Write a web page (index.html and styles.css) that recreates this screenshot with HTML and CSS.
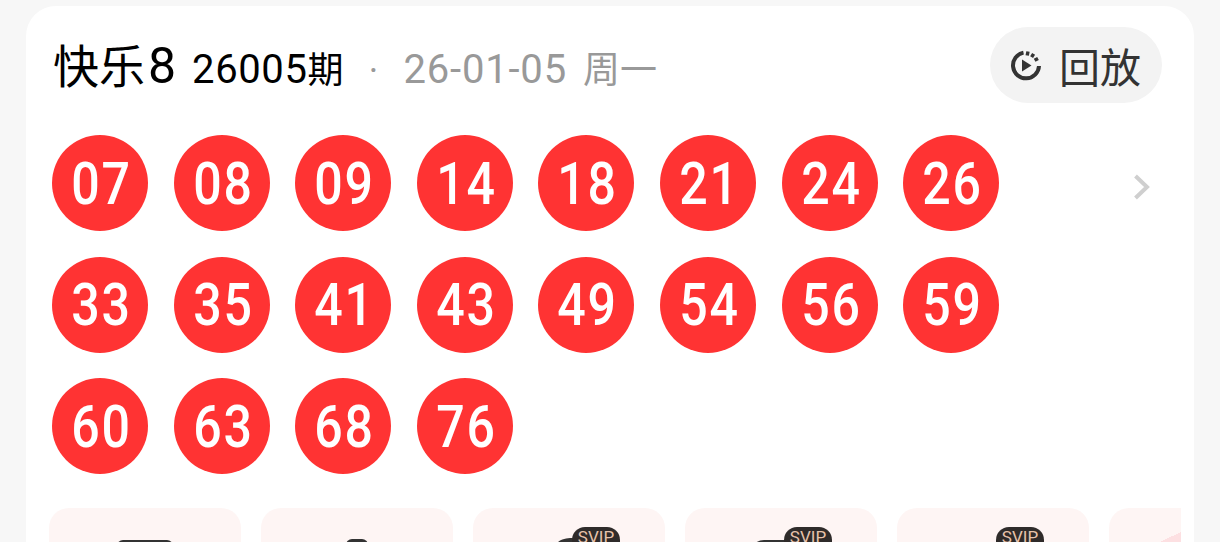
FILE: index.html
```html
<!DOCTYPE html>
<html lang="zh-CN">
<head>
  <meta charset="UTF-8" />
  <meta name="viewport" content="width=device-width, initial-scale=1.0"/>
  <title>快乐8 开奖</title>
  <link rel="stylesheet" href="styles.css">
</head>
<body>
  <div class="card">
    <div class="head">
      <div class="title">
        <span class="name">快乐<em class="name-num">8</em></span>
        <span class="issue">26005<em class="issue-unit">期</em></span>
        <span class="dot">·</span>
        <span class="date">26-01-05</span>
        <span class="week">周一</span>
      </div>
      <div class="replay">
        <svg class="replay-icon" viewBox="0 0 32 32" width="32" height="32">
          <path d="M13.5 3.6A13 13 0 1 0 29 17" fill="none" stroke="#333" stroke-width="4"/>
          <path d="M18 2.5l-0.8 4M23.6 4.8l-2 3.4M28 9.4l-3.4 1.9" fill="none" stroke="#333" stroke-width="3.4"/>
          <path d="M12 10.5l9.5 6-9.5 6z" fill="#333"/>
        </svg>
        <span>回放</span>
      </div>
    </div>

    <div class="draw">
      <div class="balls">
        <div class="ball"><span>07</span></div>
        <div class="ball"><span>08</span></div>
        <div class="ball"><span>09</span></div>
        <div class="ball"><span>14</span></div>
        <div class="ball"><span>18</span></div>
        <div class="ball"><span>21</span></div>
        <div class="ball"><span>24</span></div>
        <div class="ball"><span>26</span></div>
        <div class="ball"><span>33</span></div>
        <div class="ball"><span>35</span></div>
        <div class="ball"><span>41</span></div>
        <div class="ball"><span>43</span></div>
        <div class="ball"><span>49</span></div>
        <div class="ball"><span>54</span></div>
        <div class="ball"><span>56</span></div>
        <div class="ball"><span>59</span></div>
        <div class="ball"><span>60</span></div>
        <div class="ball"><span>63</span></div>
        <div class="ball"><span>68</span></div>
        <div class="ball"><span>76</span></div>
      </div>
      <svg class="more" viewBox="0 0 18 26" width="18" height="26">
        <path d="M2.5 2L14 13 2.5 24" fill="none" stroke="#cfcfcf" stroke-width="4"/>
      </svg>
    </div>

    <div class="tools">
      <div class="tool"><i class="pic pic-wide"></i></div>
      <div class="tool"><i class="pic pic-small"></i></div>
      <div class="tool"><i class="pic pic-a"></i><b class="svip">SVIP</b></div>
      <div class="tool"><i class="pic pic-b"></i><b class="svip">SVIP</b></div>
      <div class="tool"><b class="svip">SVIP</b></div>
      <div class="tool tool-last"></div>
    </div>
  </div>
</body>
</html>
```

FILE: styles.css
```css
html, body {
  margin: 0;
  height: 542px;
  overflow: hidden;
}

body {
  background: #f7f7f7;
  font-family: "Roboto", "Noto Sans CJK SC", sans-serif;
  padding-top: 6px;
  box-sizing: border-box;
}

em {
  font-style: normal;
}

.card {
  margin: 0 26px;
  height: 536px;
  overflow: hidden;
  background: #fff;
  border-radius: 30px 30px 0 0;
  box-sizing: border-box;
  padding: 21px 32px 0 23px;
}

.head {
  display: flex;
  align-items: center;
  justify-content: space-between;
  height: 76px;
}

.title {
  display: flex;
  align-items: baseline;
  padding: 0 0 5px 4px;
  white-space: nowrap;
}

.name {
  font-size: 46px;
  color: #000;
}

.name-num {
  font-size: 50px;
  margin-left: 3px;
}

.issue {
  font-size: 40px;
  letter-spacing: 0.6px;
  color: #000;
  margin-left: 16px;
}

.issue-unit {
  font-size: 36px;
  letter-spacing: 0;
}

.dot {
  width: 60px;
  text-align: center;
  font-size: 36px;
  color: #999;
}

.date {
  font-size: 40px;
  letter-spacing: 0.8px;
  color: #999;
}

.week {
  font-size: 37px;
  color: #999;
  margin-left: 16px;
}

.replay {
  display: flex;
  align-items: center;
  gap: 17px;
  width: 172px;
  height: 76px;
  box-sizing: border-box;
  padding-left: 20px;
  border-radius: 38px;
  background: #f3f3f3;
  color: #333;
  font-size: 41px;
}

.draw {
  display: flex;
  justify-content: space-between;
  margin: 32px 0 0 3px;
}

.balls {
  display: grid;
  grid-template-columns: repeat(8, 96px);
  column-gap: 25.6px;
  row-gap: 25.5px;
  grid-auto-rows: 96px;
}

.ball {
  display: flex;
  align-items: center;
  justify-content: center;
  padding-left: 3px;
  box-sizing: border-box;
  border-radius: 50%;
  background: #ff3333;
  color: #fff;
  font-family: "Roboto", sans-serif;
  font-size: 59px;
  font-weight: 500;
}

.ball span {
  display: block;
  transform: scaleX(0.85);
  letter-spacing: 2px;
}

.more {
  margin: 39px 11px 0 0;
}

.tools {
  display: flex;
  align-items: flex-start;
  gap: 20px;
  height: 34px;
  margin: 34px -19px 0 0;
  overflow: hidden;
}

.tool {
  position: relative;
  flex: 0 0 192px;
  height: 80px;
  border-radius: 20px;
  background: #fef5f4;
}

.tool-last {
  background: linear-gradient(154.5deg, #fef5f4 52.6px, #fde0e2 52.6px);
}

.pic {
  position: absolute;
  top: 32px;
  height: 20px;
  background: #333;
  border-radius: 6px 6px 0 0;
}

.pic-wide {
  left: 68px;
  width: 56px;
}

.pic-small {
  left: 85px;
  width: 22px;
  top: 31px;
}

.pic-a {
  left: 77px;
  width: 50px;
  top: 30px;
  border-radius: 22px 0 0 0;
}

.pic-b {
  left: 65px;
  width: 62px;
  border-radius: 14px 0 0 0;
}

.svip {
  position: absolute;
  top: 19px;
  left: 99px;
  width: 48px;
  height: 30px;
  border-radius: 13px;
  background: #2f2b2a;
  color: #e8c3ab;
  font-family: "Roboto", sans-serif;
  font-size: 17px;
  font-weight: 400;
  line-height: 21px;
  text-align: center;
}
```
